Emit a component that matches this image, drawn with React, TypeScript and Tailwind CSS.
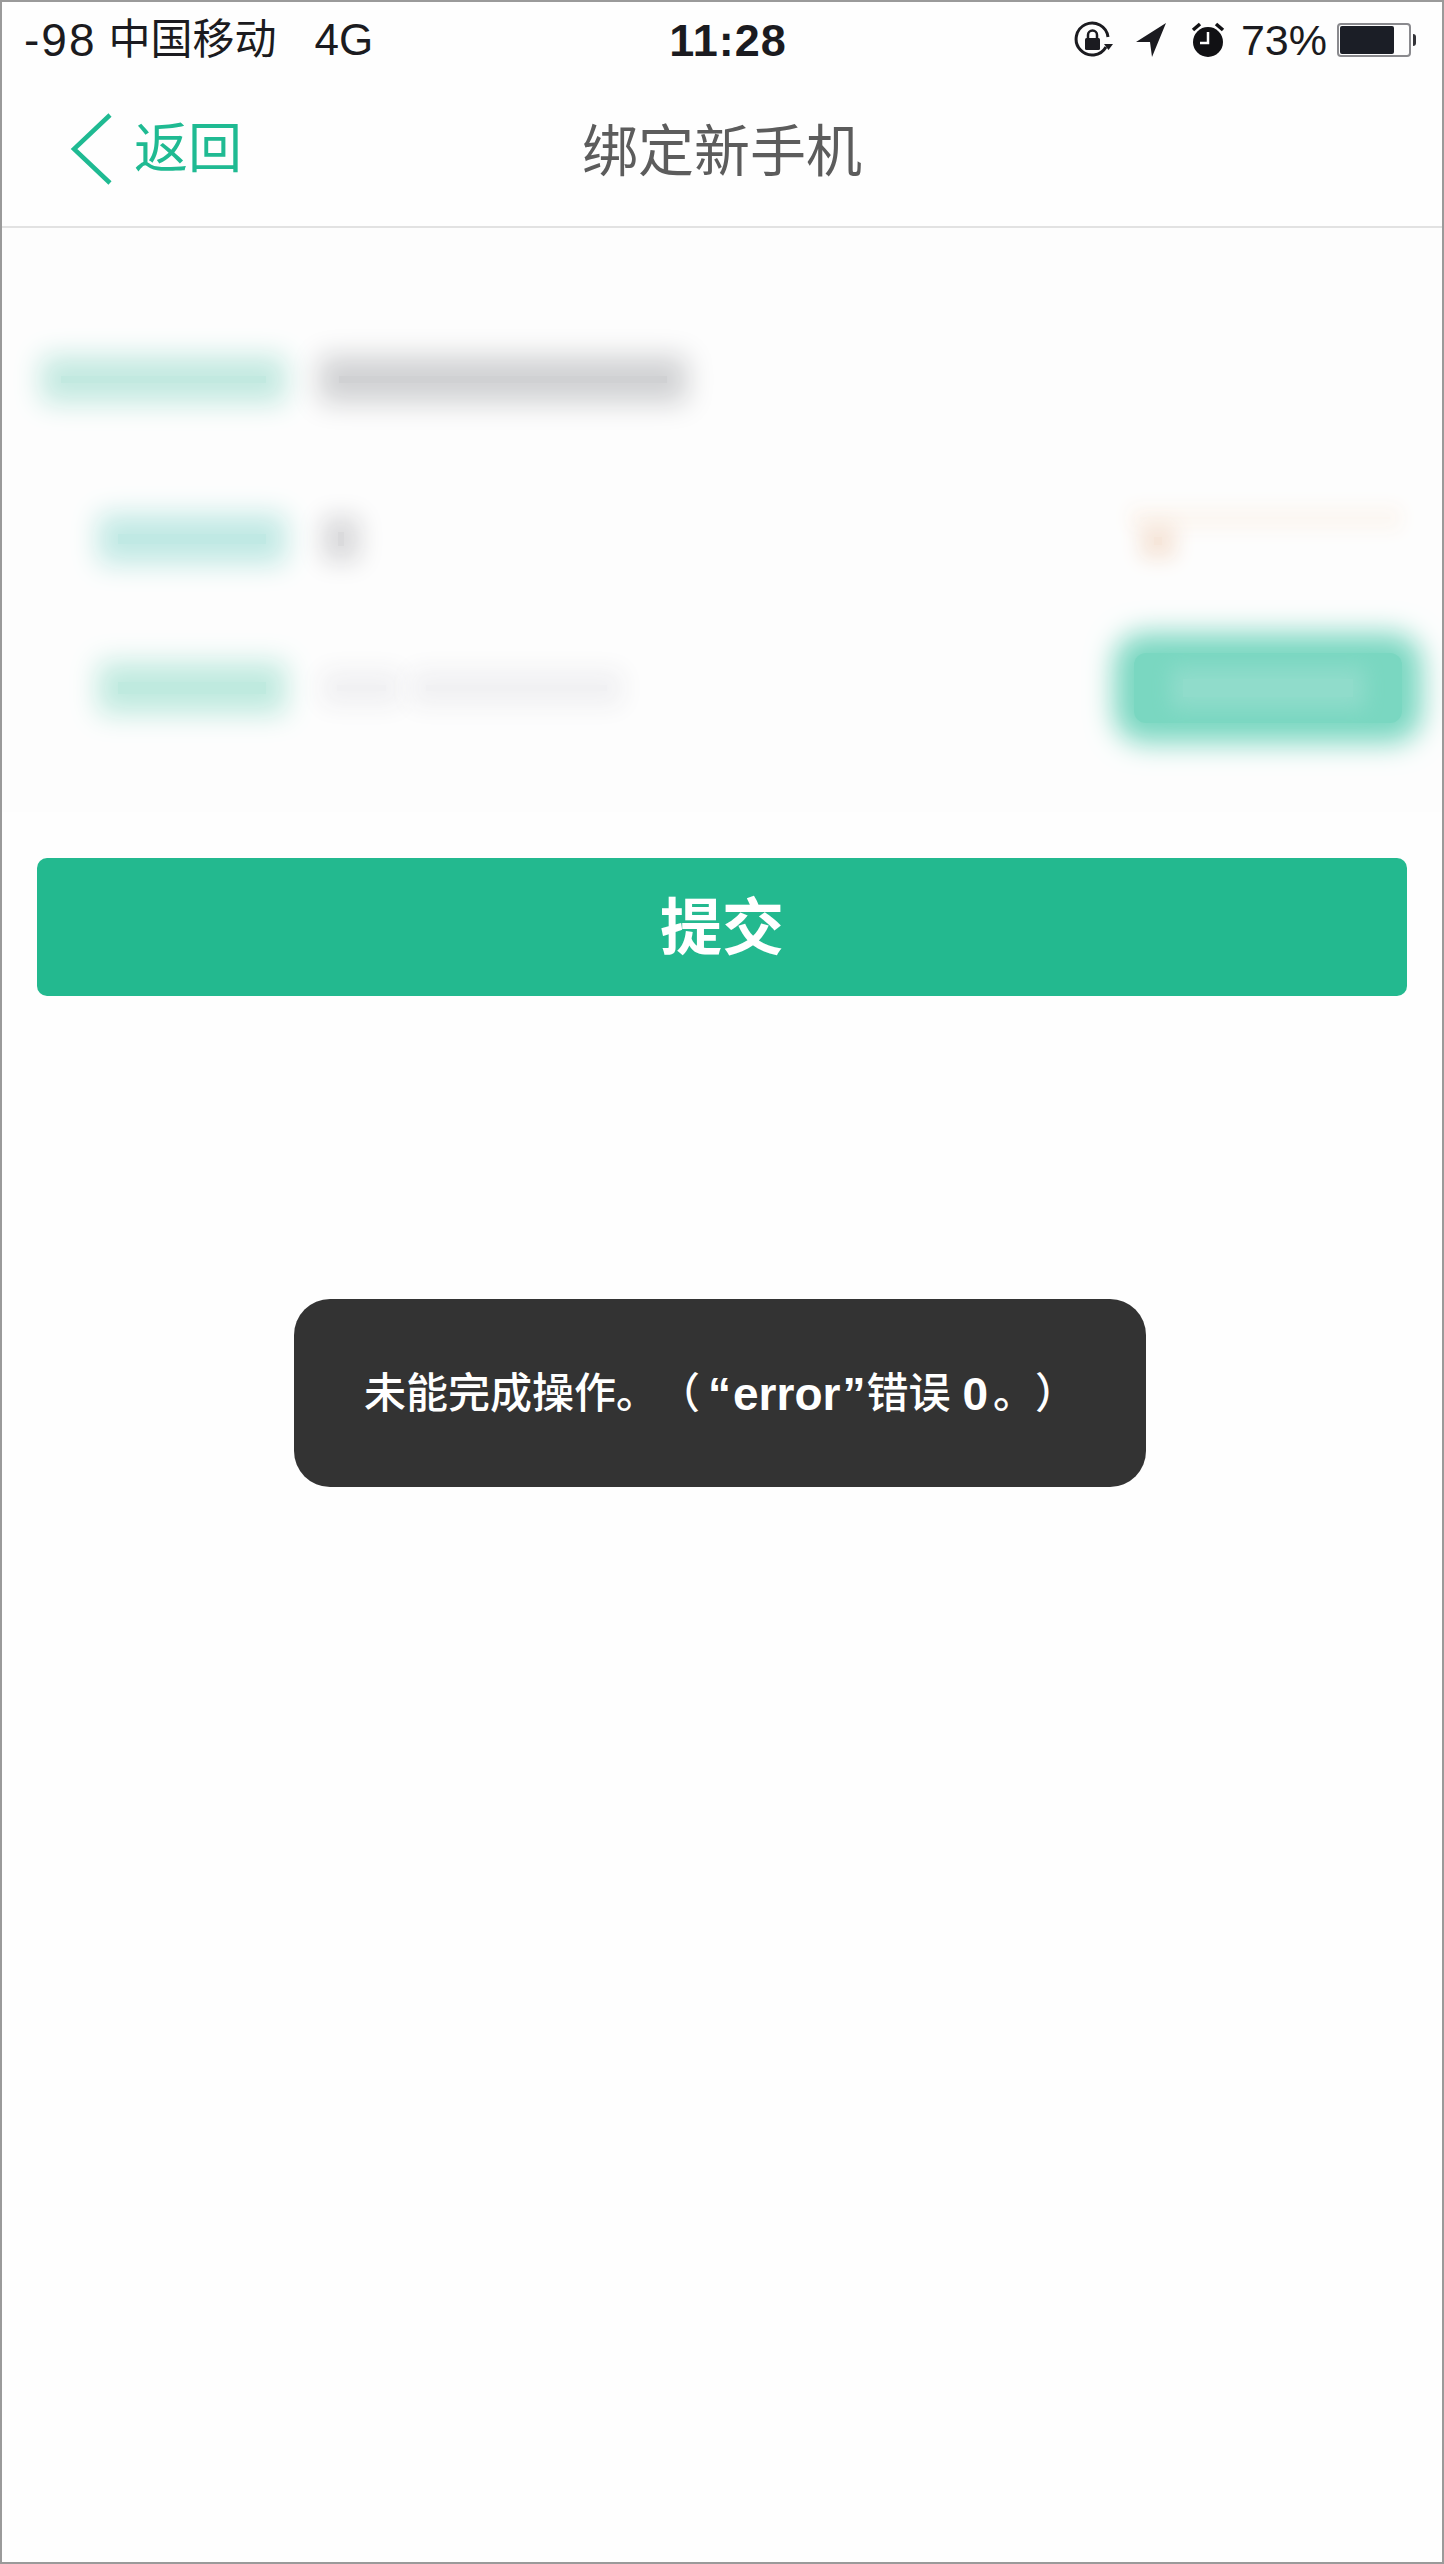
import React from 'react';

const fontStack = { fontFamily: '"Liberation Sans", "Noto Sans CJK SC", sans-serif' };

const RotationLock = () => (
  <svg width="40" height="40" viewBox="0 0 40 40" fill="none">
    <path d="M33 27 A16 16 0 1 1 35 17" stroke="#1b1b20" strokeWidth="3" />
    <path d="M31 24 h9 l-4.500 6 z" fill="#1b1b20" />
    <rect x="12" y="18" width="15" height="12" rx="1.500" fill="#1b1b20" />
    <path d="M15 18 v-3 a4.500 4.500 0 0 1 9 0 v3" stroke="#1b1b20" strokeWidth="2.500" />
  </svg>
);

const LocationArrow = () => (
  <svg width="32" height="36" viewBox="0 0 32 36">
    <path d="M31 1 L1 20 L15 20 L17 35 Z" fill="#1b1b20" />
  </svg>
);

const AlarmClock = () => (
  <svg width="34" height="38" viewBox="0 0 34 38" fill="none">
    <circle cx="17" cy="21" r="15" fill="#111114" />
    <path d="M17 11 V22 H9" stroke="#ffffff" strokeWidth="2.500" />
    <path d="M2 9 L9 3" stroke="#111114" strokeWidth="3.500" />
    <path d="M32 9 L25 3" stroke="#111114" strokeWidth="3.500" />
  </svg>
);

const Battery = () => (
  <div className="flex items-center">
    <div className="flex h-[34px] w-[74px] rounded-[4px] border-2 border-[#8a8a8e] p-px">
      <div className="h-full w-[54px] rounded-[2px] bg-[#1b1e26]" />
    </div>
    <div className="ml-[2px] h-[12px] w-[3px] rounded-r-sm bg-[#333338]" />
  </div>
);

export default function App() {
  return (
    <div
      className="relative flex h-[2564px] w-[1444px] flex-col overflow-hidden border-2 border-[#9a9a9a] bg-[#fefefe]"
      style={fontStack}
    >
      {/* status bar */}
      <div className="grid h-[76px] shrink-0 grid-cols-[1fr_auto_1fr] items-center pl-[22px] pr-[26px] text-[#1b1b20]">
        <div className="flex items-center leading-none">
          <span className="text-[46px] tracking-[2px]">-98</span>
          <span className="ml-[12px] text-[42px]">中国移动</span>
          <span className="ml-[38px] text-[44px]">4G</span>
        </div>
        <div className="pl-[16px] text-[45px] font-bold leading-none tracking-[1px]">11:28</div>
        <div className="flex items-center justify-end">
          <RotationLock />
          <div className="ml-[22px]"><LocationArrow /></div>
          <div className="ml-[24px]"><AlarmClock /></div>
          <div className="ml-[16px] text-[43px] leading-none">73%</div>
          <div className="ml-[10px]"><Battery /></div>
        </div>
      </div>

      {/* nav bar */}
      <div className="relative flex h-[150px] shrink-0 items-center justify-center border-b-2 border-[#e2e2e2]">
        <div className="absolute left-[66px] top-[34px] flex items-center text-[#1fba92]">
          <svg width="46" height="74" viewBox="0 0 46 74" fill="none">
            <path d="M42 3 L6 37 L42 71" stroke="#1fba92" strokeWidth="4.500" />
          </svg>
          <span className="ml-[20px] text-[54px] leading-none">返回</span>
        </div>
        <div className="text-[56px] leading-none text-[#5c5c5c]">绑定新手机</div>
      </div>

      {/* blurred form, soft shadows stand in for the masked fields */}
      <div className="h-[584px] shrink-0 overflow-hidden bg-[#fdfdfd] pr-[22px] pt-[96px]">
        <div className="flex h-[110px] items-center pl-[59px]">
          <div className="h-[7px] w-[205px] bg-[#c2e9e0] shadow-[0_0_28px_20px_#c2e9e0]" />
          <div className="ml-[73px] h-[7px] w-[328px] bg-[#d0d1d3] shadow-[0_0_28px_20px_#d0d1d3]" />
        </div>
        <div className="mt-[50px] flex h-[110px] items-center pl-[116px]">
          <div className="h-[10px] w-[148px] bg-[#c0e9e4] shadow-[0_0_28px_20px_#c0e9e4]" />
          <div className="ml-[72px] h-[14px] w-[6px] bg-[#dadadc] shadow-[0_0_24px_16px_#dadadc]" />
          <div className="ml-auto mr-[30px] h-[44px] w-[250px]">
            <div className="h-[2px] w-full bg-[#fcf7f2] shadow-[0_0_18px_12px_#fcf7f2]" />
            <div className="ml-[14px] mt-[18px] h-[8px] w-[8px] bg-[#f6e6da] shadow-[0_0_20px_14px_#f6e6da]" />
          </div>
        </div>
        <div className="mt-[39px] flex h-[110px] items-center pl-[116px]">
          <div className="h-[12px] w-[148px] bg-[#bfeadf] shadow-[0_0_28px_20px_#bfeadf]" />
          <div className="ml-[71px] h-[6px] w-[49px] bg-[#f1f1f3] shadow-[0_0_24px_16px_#f1f1f3]" />
          <div className="ml-[40px] h-[6px] w-[181px] bg-[#f1f1f3] shadow-[0_0_24px_16px_#f1f1f3]" />
          <div className="ml-auto mr-[18px] flex h-[70px] w-[268px] items-center justify-center rounded-xl bg-[#7ad7c1] shadow-[0_0_28px_20px_#7ad7c1]">
            <div className="h-[18px] w-[170px] bg-[#90dccb] shadow-[0_0_20px_12px_#90dccb]" />
          </div>
        </div>
      </div>

      {/* submit */}
      <div className="mx-[35px] mt-[46px] flex h-[138px] shrink-0 items-center justify-center rounded-[10px] bg-[#23b98f] pt-[4px] text-[62px] font-bold leading-none text-white">
        提交
      </div>

      {/* toast */}
      <div className="absolute left-[292px] top-[1297px] flex h-[188px] w-[852px] items-center rounded-[36px] bg-[#333333] pl-[70px] pt-[2px] text-[42px] font-medium leading-none text-white [text-spacing-trim:space-all]">
        <span>未能完成操作。（</span>
        <span className="ml-[8px] text-[46px] font-bold">“</span>
        <span className="ml-[2px] text-[46px] font-bold">error</span>
        <span className="ml-[2px] text-[46px] font-bold">”</span>
        <span className="ml-[1px]">错误</span>
        <span className="ml-[12px] text-[46px] font-bold">0</span>
        <span className="ml-[5px]">。）</span>
      </div>
    </div>
  );
}
